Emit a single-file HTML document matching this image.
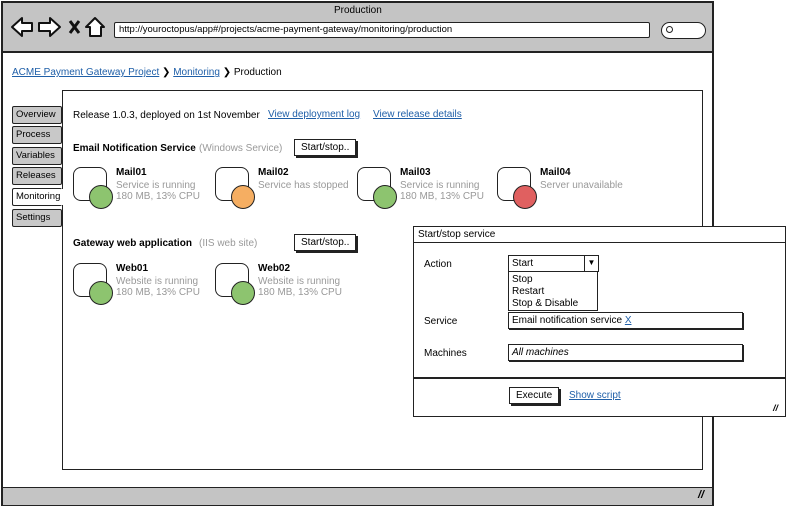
<!DOCTYPE html>
<html><head><style>
*{margin:0;padding:0;box-sizing:border-box}
body{width:787px;height:507px;background:#fff;position:relative;overflow:hidden;font-family:"Liberation Sans",sans-serif;font-size:10px;color:#000}
.a{position:absolute}
a,.l{color:#1f5fa8;text-decoration:underline}
.tab{position:absolute;left:12px;width:50px;height:18px;border:1.5px solid #222;background:#c8c8c8;padding:2px 3px;font-size:9.5px;border-radius:2px}
.srv{position:absolute;width:50px;height:45px}
.box{position:absolute;left:0;top:0;width:34px;height:34px;border:1.5px solid #222;border-radius:8px;background:#fff}
.dot{position:absolute;left:16px;top:18px;width:24px;height:24px;border:1.5px solid #222;border-radius:50%}
.nm{position:absolute;left:43px;top:0;font-weight:bold;font-size:10px;white-space:nowrap}
.st{position:absolute;left:43px;top:13px;color:#999;font-size:10px;line-height:11px;white-space:nowrap}
.btn{position:absolute;border:1.5px solid #222;box-shadow:2px 2px 0 #222;background:#fff;padding:2px 6px;font-size:10px;height:17px}
.inp{position:absolute;border:1.5px solid #222;background:#fff;padding:2px 3px;font-size:10px;height:17px;box-shadow:1px 1px 0 #222}
</style></head><body>
<div class="a" style="left:1px;top:1px;width:713px;height:505px;border:2px solid #222;background:#fff"></div>
<div class="a" style="left:3px;top:3px;width:709px;height:50px;background:#c4c4c4;border-bottom:2px solid #222"></div>
<div class="a" style="left:334px;top:5px;font-size:10px">Production</div>
<svg class="a" style="left:10px;top:15px" width="100" height="24" viewBox="0 0 100 24">
<path d="M2 12 L12 3 L12 8 L22 8 L22 16 L12 16 L12 21 Z" fill="#fff" stroke="#111" stroke-width="2" stroke-linejoin="round"/>
<path d="M50 12 L40 3 L40 8 L29 8 L29 16 L40 16 L40 21 Z" fill="#fff" stroke="#111" stroke-width="2" stroke-linejoin="round"/>
<path d="M60 6 L69 18 M69 6 L60 18" stroke="#111" stroke-width="3"/>
<path d="M76 12 L85 3 L94 12 L91 12 L91 21 L80 21 L80 12 Z" fill="#fff" stroke="#111" stroke-width="2" stroke-linejoin="round"/>
</svg>
<div class="a" style="left:114px;top:22px;width:536px;height:16px;border:1.5px solid #222;background:#fff;border-radius:2px;font-size:9.5px;padding:1px 4px">http://youroctopus/app#/projects/acme-payment-gateway/monitoring/production</div>
<div class="a" style="left:661px;top:22px;width:45px;height:17px;border:1.5px solid #222;background:#fff;border-radius:9px"></div>
<div class="a" style="left:666px;top:26px;width:7px;height:7px;border:1.5px solid #222;border-radius:50%"></div>
<div class="a" style="left:3px;top:487px;width:709px;height:18px;background:#c4c4c4;border-top:1.5px solid #222"></div>
<div class="a" style="left:698px;top:489px;font-size:11px;font-weight:bold;font-style:italic">//</div>
<div class="a" style="left:12px;top:67px;font-size:10px;white-space:nowrap"><span class="l">ACME Payment Gateway Project</span> ❯ <span class="l">Monitoring</span> ❯ Production</div>
<div class="tab" style="top:106px">Overview</div>
<div class="tab" style="top:126px">Process</div>
<div class="tab" style="top:147px">Variables</div>
<div class="tab" style="top:167px">Releases</div>
<div class="tab" style="top:188px;background:#fff;border-right:none">Monitoring</div>
<div class="tab" style="top:209px">Settings</div>
<div class="a" style="left:62px;top:90px;width:641px;height:380px;border:1.5px solid #222"></div>
<div class="a" style="left:61px;top:189px;width:3px;height:16px;background:#fff"></div>
<div class="a" style="left:73px;top:110px;font-size:10px">Release 1.0.3, deployed on 1st November</div>
<div class="a l" style="left:268px;top:109px;font-size:10px">View deployment log</div>
<div class="a l" style="left:373px;top:109px;font-size:10px">View release details</div>
<div class="a" style="left:73px;top:143px;font-weight:bold">Email Notification Service</div>
<div class="a" style="left:199px;top:143px;color:#999">(Windows Service)</div>
<div class="btn" style="left:294px;top:139px">Start/stop..</div>
<div class="srv" style="left:73px;top:167px"><div class="box"></div><div class="dot" style="background:#8dc46f"></div><div class="nm">Mail01</div><div class="st">Service is running<br>180 MB, 13% CPU</div></div>
<div class="srv" style="left:215px;top:167px"><div class="box"></div><div class="dot" style="background:#f5ae62"></div><div class="nm">Mail02</div><div class="st">Service has stopped</div></div>
<div class="srv" style="left:357px;top:167px"><div class="box"></div><div class="dot" style="background:#8dc46f"></div><div class="nm">Mail03</div><div class="st">Service is running<br>180 MB, 13% CPU</div></div>
<div class="srv" style="left:497px;top:167px"><div class="box"></div><div class="dot" style="background:#e06060"></div><div class="nm">Mail04</div><div class="st">Server unavailable</div></div>
<div class="a" style="left:73px;top:238px;font-weight:bold">Gateway web application</div>
<div class="a" style="left:199px;top:238px;color:#999">(IIS web site)</div>
<div class="btn" style="left:294px;top:234px">Start/stop..</div>
<div class="srv" style="left:73px;top:263px"><div class="box"></div><div class="dot" style="background:#8dc46f"></div><div class="nm">Web01</div><div class="st">Website is running<br>180 MB, 13% CPU</div></div>
<div class="srv" style="left:215px;top:263px"><div class="box"></div><div class="dot" style="background:#8dc46f"></div><div class="nm">Web02</div><div class="st">Website is running<br>180 MB, 13% CPU</div></div>
<div class="a" style="left:413px;top:226px;width:373px;height:191px;border:1.5px solid #222;background:#fff"></div>
<div class="a" style="left:413px;top:226px;width:373px;height:17px;border:1.5px solid #222;padding:2px 4px">Start/stop service</div>
<div class="a" style="left:413px;top:377px;width:373px;height:1.5px;background:#222"></div>
<div class="a" style="left:424px;top:259px">Action</div>
<div class="inp" style="left:508px;top:255px;width:91px;box-shadow:none">Start</div>
<div class="a" style="left:584px;top:255px;width:15px;height:17px;border:1.5px solid #222;font-size:8px;text-align:center;line-height:14px">▼</div>
<div class="a" style="left:508px;top:271px;width:90px;height:40px;border:1.5px solid #222;background:#fff;padding:2px 3px;line-height:12px">Stop<br>Restart<br>Stop &amp; Disable</div>
<div class="a" style="left:424px;top:316px">Service</div>
<div class="inp" style="left:508px;top:312px;width:235px">Email notification service <span class="l">X</span></div>
<div class="a" style="left:424px;top:348px">Machines</div>
<div class="inp" style="left:508px;top:344px;width:235px;font-style:italic">All machines</div>
<div class="btn" style="left:509px;top:387px">Execute</div>
<div class="a l" style="left:569px;top:390px">Show script</div>
<div class="a" style="left:773px;top:403px;font-size:9px;font-weight:bold;font-style:italic">//</div>
</body></html>
